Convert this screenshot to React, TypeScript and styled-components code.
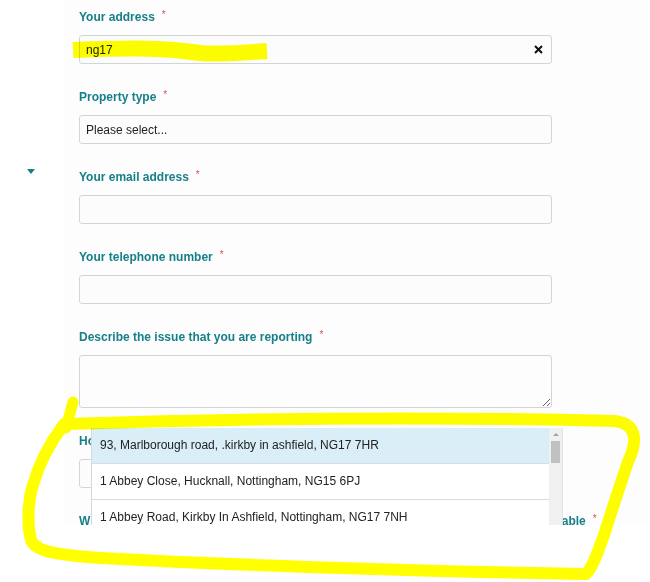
import { FC } from 'react';
import styled, { createGlobalStyle } from 'styled-components';

const GlobalStyle = createGlobalStyle`
  body {
    margin: 0;
    background: #fff;
    font-family: "Liberation Sans", Arial, sans-serif;
  }
`;

const addresses = [
  '93, Marlborough road, .kirkby in ashfield, NG17 7HR',
  '1 Abbey Close, Hucknall, Nottingham, NG15 6PJ',
  '1 Abbey Road, Kirkby In Ashfield, Nottingham, NG17 7NH',
  '1 Abbey Street, Hucknall, Nottingham, NG15 7AB',
];

const App: FC = () => {
  return (
    <Page>
      <GlobalStyle />
      <Screen>
        <Side>
          <Caret />
        </Side>
        <Panel>
          <Form>
            <Field>
              <Label>
                Your address<Req>*</Req>
              </Label>
              <InputWrap>
                <TextInput defaultValue="ng17" />
                <ClearButton>
                  <svg width="9" height="9" viewBox="0 0 9 9">
                    <path d="M1 1 L8 8 M8 1 L1 8" stroke="#111" strokeWidth="2" />
                  </svg>
                </ClearButton>
              </InputWrap>
            </Field>
            <Field>
              <Label>
                Property type<Req>*</Req>
              </Label>
              <TextInput defaultValue="Please select..." />
            </Field>
            <Field>
              <Label>
                Your email address<Req>*</Req>
              </Label>
              <TextInput />
            </Field>
            <Field>
              <Label>
                Your telephone number<Req>*</Req>
              </Label>
              <TextInput />
            </Field>
            <Field>
              <Label>
                Describe the issue that you are reporting<Req>*</Req>
              </Label>
              <TextArea />
            </Field>
            <Field>
              <Label>How long has this issue been going on?</Label>
              <TextInput />
            </Field>
            <Field>
              <Label>
                When is the best time for us to contact you, by telephone or by email, if this is applicable
                <Req>*</Req>
              </Label>
              <TextInput />
            </Field>
          </Form>
        </Panel>

        <Dropdown>
          <Options>
            {addresses.map((a, i) => (
              <Option key={a} $active={i === 0}>
                {a}
              </Option>
            ))}
          </Options>
          <ScrollTrack>
            <ScrollArrow />
            <ScrollThumb />
          </ScrollTrack>
        </Dropdown>
      </Screen>

      <Scribble viewBox="0 0 650 582" width="650" height="582">
        <path
          d="M73 50 C 120 48, 160 47, 200 53 C 225 55, 250 52, 267 51"
          stroke="#ffff00"
          strokeWidth="16"
          fill="none"
        />
        <path d="M73 402 L 66 428" stroke="#ffff00" strokeWidth="11" fill="none" strokeLinecap="round" />
        <path
          d="M66 424 C 250 418, 450 417, 615 421 C 640 424, 636 445, 628 462 C 620 485, 612 510, 604 535 C 597 555, 592 568, 586 574 C 450 572, 250 566, 100 558 C 60 555, 35 552, 31 540 C 27 525, 28 500, 33 485 C 40 460, 52 440, 64 424"
          stroke="#ffff00"
          strokeWidth="12"
          fill="none"
          strokeLinecap="round"
          strokeLinejoin="round"
        />
      </Scribble>
    </Page>
  );
};

export default App;

const Page = styled.div`
  position: relative;
  width: 650px;
  height: 582px;
  overflow: hidden;
  background: #fff;
`;

const Screen = styled.div`
  position: relative;
  display: grid;
  grid-template-columns: 65px 1fr;
  height: 525px;
  overflow: hidden;
`;

const Side = styled.div`
  padding: 169px 0 0 27px;
  background: #fff;
`;

const Caret = styled.div`
  width: 0;
  height: 0;
  border-left: 4.5px solid transparent;
  border-right: 4.5px solid transparent;
  border-top: 5px solid #16808a;
`;

const Panel = styled.div`
  background: #fdfdfd;
  padding: 8px 0 0 14px;
`;

const Form = styled.div`
  width: 473px;
`;

const Field = styled.div`
  margin-bottom: 24px;
`;

const Label = styled.div`
  font-size: 12px;
  font-weight: bold;
  line-height: 18px;
  color: #16808a;
  margin-bottom: 9px;
  white-space: nowrap;
`;

const Req = styled.span`
  color: #d9534f;
  font-size: 10px;
  font-weight: normal;
  margin-left: 7px;
  vertical-align: top;
  line-height: 14px;
`;

const InputWrap = styled.div`
  position: relative;
`;

const TextInput = styled.input`
  display: block;
  box-sizing: border-box;
  width: 100%;
  height: 29px;
  border: 1px solid #d4d4d4;
  border-radius: 3px;
  background: #fcfcfc;
  padding: 0 6px;
  font-family: "Liberation Sans", Arial, sans-serif;
  font-size: 12px;
  color: #222;
  outline: none;
`;

const TextArea = styled.textarea`
  display: block;
  box-sizing: border-box;
  width: 100%;
  height: 53px;
  border: 1px solid #d4d4d4;
  border-radius: 3px;
  background: #fdfdfd;
  resize: vertical;
  outline: none;
`;

const ClearButton = styled.span`
  position: absolute;
  right: 9px;
  top: 10px;
  display: flex;
`;

const Dropdown = styled.div`
  position: absolute;
  left: 91px;
  top: 428px;
  width: 472px;
  height: 150px;
  box-sizing: border-box;
  display: flex;
  border-left: 1px solid #d8d8d8;
  background: #fff;
`;

const Options = styled.div`
  flex: 1;
`;

const Option = styled.div<{ $active?: boolean }>`
  height: 36px;
  box-sizing: border-box;
  border-bottom: 1px solid #d6dde3;
  padding-left: 8px;
  line-height: 35px;
  font-size: 12px;
  color: #222;
  background: ${({ $active }) => ($active ? '#d9eef7' : '#fff')};
`;

const ScrollTrack = styled.div`
  width: 13px;
  background: #f0f0f0;
  border-right: 1px solid #e4e4e4;
  display: flex;
  flex-direction: column;
  align-items: center;
`;

const ScrollArrow = styled.div`
  margin-top: 5px;
  width: 0;
  height: 0;
  border-left: 3px solid transparent;
  border-right: 3px solid transparent;
  border-bottom: 3px solid #a3a3a3;
`;

const ScrollThumb = styled.div`
  margin-top: 5px;
  width: 9px;
  height: 22px;
  background: #c1c1c1;
`;

const Scribble = styled.svg`
  position: absolute;
  left: 0;
  top: 0;
  pointer-events: none;
  mix-blend-mode: multiply;
`;
